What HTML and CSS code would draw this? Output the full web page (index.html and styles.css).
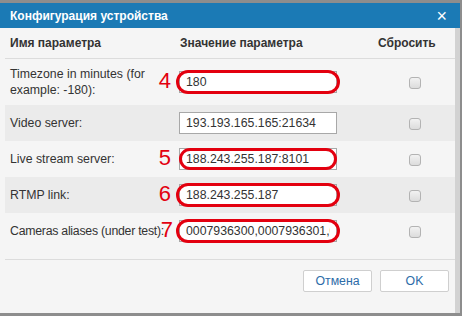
FILE: index.html
```html
<!DOCTYPE html>
<html lang="ru">
<head>
    <meta charset="UTF-8">
    <title>Конфигурация устройства</title>
    <link rel="stylesheet" href="styles.css">
</head>
<body>
    <div class="window">
        <div class="titlebar">
            <span class="title">Конфигурация устройства</span>
            <span class="close">&times;</span>
        </div>
        <div class="frame">
            <div class="content">
                <table class="params">
                    <colgroup>
                        <col class="col-name">
                        <col class="col-value">
                        <col class="col-reset">
                    </colgroup>
                    <thead>
                        <tr>
                            <th>Имя параметра</th>
                            <th class="th-value">Значение параметра</th>
                            <th class="th-reset">Сбросить</th>
                        </tr>
                    </thead>
                    <tbody>
                        <tr>
                            <td class="name">Timezone in minutes (for example: -180):</td>
                            <td class="value">
                                <span class="field">
                                    <input type="text" value="180">
                                    <span class="ring ring-wide"></span>
                                    <span class="mark">4</span>
                                </span>
                            </td>
                            <td class="reset"><input type="checkbox"></td>
                        </tr>
                        <tr class="alt">
                            <td class="name">Video server:</td>
                            <td class="value">
                                <span class="field">
                                    <input type="text" value="193.193.165.165:21634">
                                </span>
                            </td>
                            <td class="reset"><input type="checkbox"></td>
                        </tr>
                        <tr>
                            <td class="name">Live stream server:</td>
                            <td class="value">
                                <span class="field">
                                    <input type="text" value="188.243.255.187:8101">
                                    <span class="ring"></span>
                                    <span class="mark">5</span>
                                </span>
                            </td>
                            <td class="reset"><input type="checkbox"></td>
                        </tr>
                        <tr class="alt">
                            <td class="name">RTMP link:</td>
                            <td class="value">
                                <span class="field">
                                    <input type="text" value="188.243.255.187">
                                    <span class="ring ring-wide"></span>
                                    <span class="mark">6</span>
                                </span>
                            </td>
                            <td class="reset"><input type="checkbox"></td>
                        </tr>
                        <tr>
                            <td class="name nowrap">Cameras aliases (under test):</td>
                            <td class="value">
                                <span class="field">
                                    <input type="text" value="0007936300,0007936301,0007936302">
                                    <span class="ring ring-wide"></span>
                                    <span class="mark mark-near">7</span>
                                </span>
                            </td>
                            <td class="reset"><input type="checkbox"></td>
                        </tr>
                    </tbody>
                </table>

                <div class="footer">
                    <button class="btn">Отмена</button>
                    <button class="btn">OK</button>
                </div>
            </div>
            <div class="track"></div>
        </div>
    </div>
</body>
</html>
```

FILE: styles.css
```css
body {
    margin: 0;
    background: #8d8d8d;
    font-family: "Liberation Sans", Arial, sans-serif;
    font-size: 12.3px;
    color: #333;
}

.window {
    width: 460px;
    margin-top: 3px;
}

.titlebar {
    height: 25px;
    background: #1b7ab5;
    color: white;
    display: flex;
    align-items: center;
    justify-content: space-between;
    padding: 0 13px 0 10px;
}

.title {
    font-weight: bold;
    font-size: 12px;
}

.close {
    font-size: 18px;
    line-height: 18px;
}

.frame {
    display: flex;
    height: 285px;
}

.content {
    width: 455px;
    background: #f5f5f5;
}

.track {
    flex: 1;
    background: #d2d2d2;
}

.params {
    table-layout: fixed;
    width: 450px;
    margin: 0 0 10px 5px;
    border-collapse: collapse;
}

.col-name {
    width: 174px;
}

.col-value {
    width: 196px;
}

.col-reset {
    width: 80px;
}

.params th {
    text-align: left;
    font-weight: bold;
    font-size: 12px;
    line-height: 16px;
    padding: 7px 5px;
    border-bottom: 1px solid #dcdcdc;
}

.params th.th-value {
    padding-left: 1px;
}

.params th.th-reset {
    padding-left: 3px;
}

.params td {
    line-height: 16px;
    padding: 7px 5px;
    vertical-align: middle;
}

.params td.nowrap {
    white-space: nowrap;
    letter-spacing: -0.25px;
}

.params td.value {
    padding-left: 0;
    padding-right: 0;
}

.params td.reset {
    text-align: center;
    padding: 0;
}

.params tr.alt td {
    background: #ebebeb;
}

.field {
    position: relative;
    display: inline-block;
    vertical-align: middle;
}

.field input {
    display: block;
    width: 158px;
    height: 22px;
    box-sizing: border-box;
    border: 1px solid #a8a8a8;
    padding: 0 6px;
    font-family: "Liberation Sans", Arial, sans-serif;
    font-size: 12.3px;
    color: #333;
    background: white;
    outline: none;
}

/* red annotation marks drawn over the screenshot */
.ring {
    position: absolute;
    top: 0;
    bottom: 0;
    left: 0;
    right: 0;
    border: 3px solid #e3000f;
    border-radius: 12px;
}

.ring.ring-wide {
    top: -1px;
    bottom: -1px;
    left: -3px;
    right: -3px;
}

.mark {
    position: absolute;
    right: calc(100% + 8px);
    top: -2px;
    font-size: 22px;
    line-height: 24px;
    color: #e3000f;
}

.mark.mark-near {
    right: calc(100% + 6px);
}

.reset input[type="checkbox"] {
    appearance: none;
    -webkit-appearance: none;
    width: 12px;
    height: 12px;
    margin: 0;
    vertical-align: middle;
    border: 1px solid #b3b3b3;
    border-radius: 3px;
    background: linear-gradient(#f2f2f2, #dcdcdc);
}

.footer {
    margin: 0 0 0 5px;
    border-top: 1px solid #dcdcdc;
    padding: 10px 6px 0 0;
    display: flex;
    justify-content: flex-end;
    gap: 8px;
}

.btn {
    width: 69px;
    height: 22px;
    background: white;
    border: 1px solid #cfcfcf;
    border-radius: 2px;
    color: #2c6ca8;
    font-family: "Liberation Sans", Arial, sans-serif;
    font-size: 12.3px;
    padding: 0;
}
```
